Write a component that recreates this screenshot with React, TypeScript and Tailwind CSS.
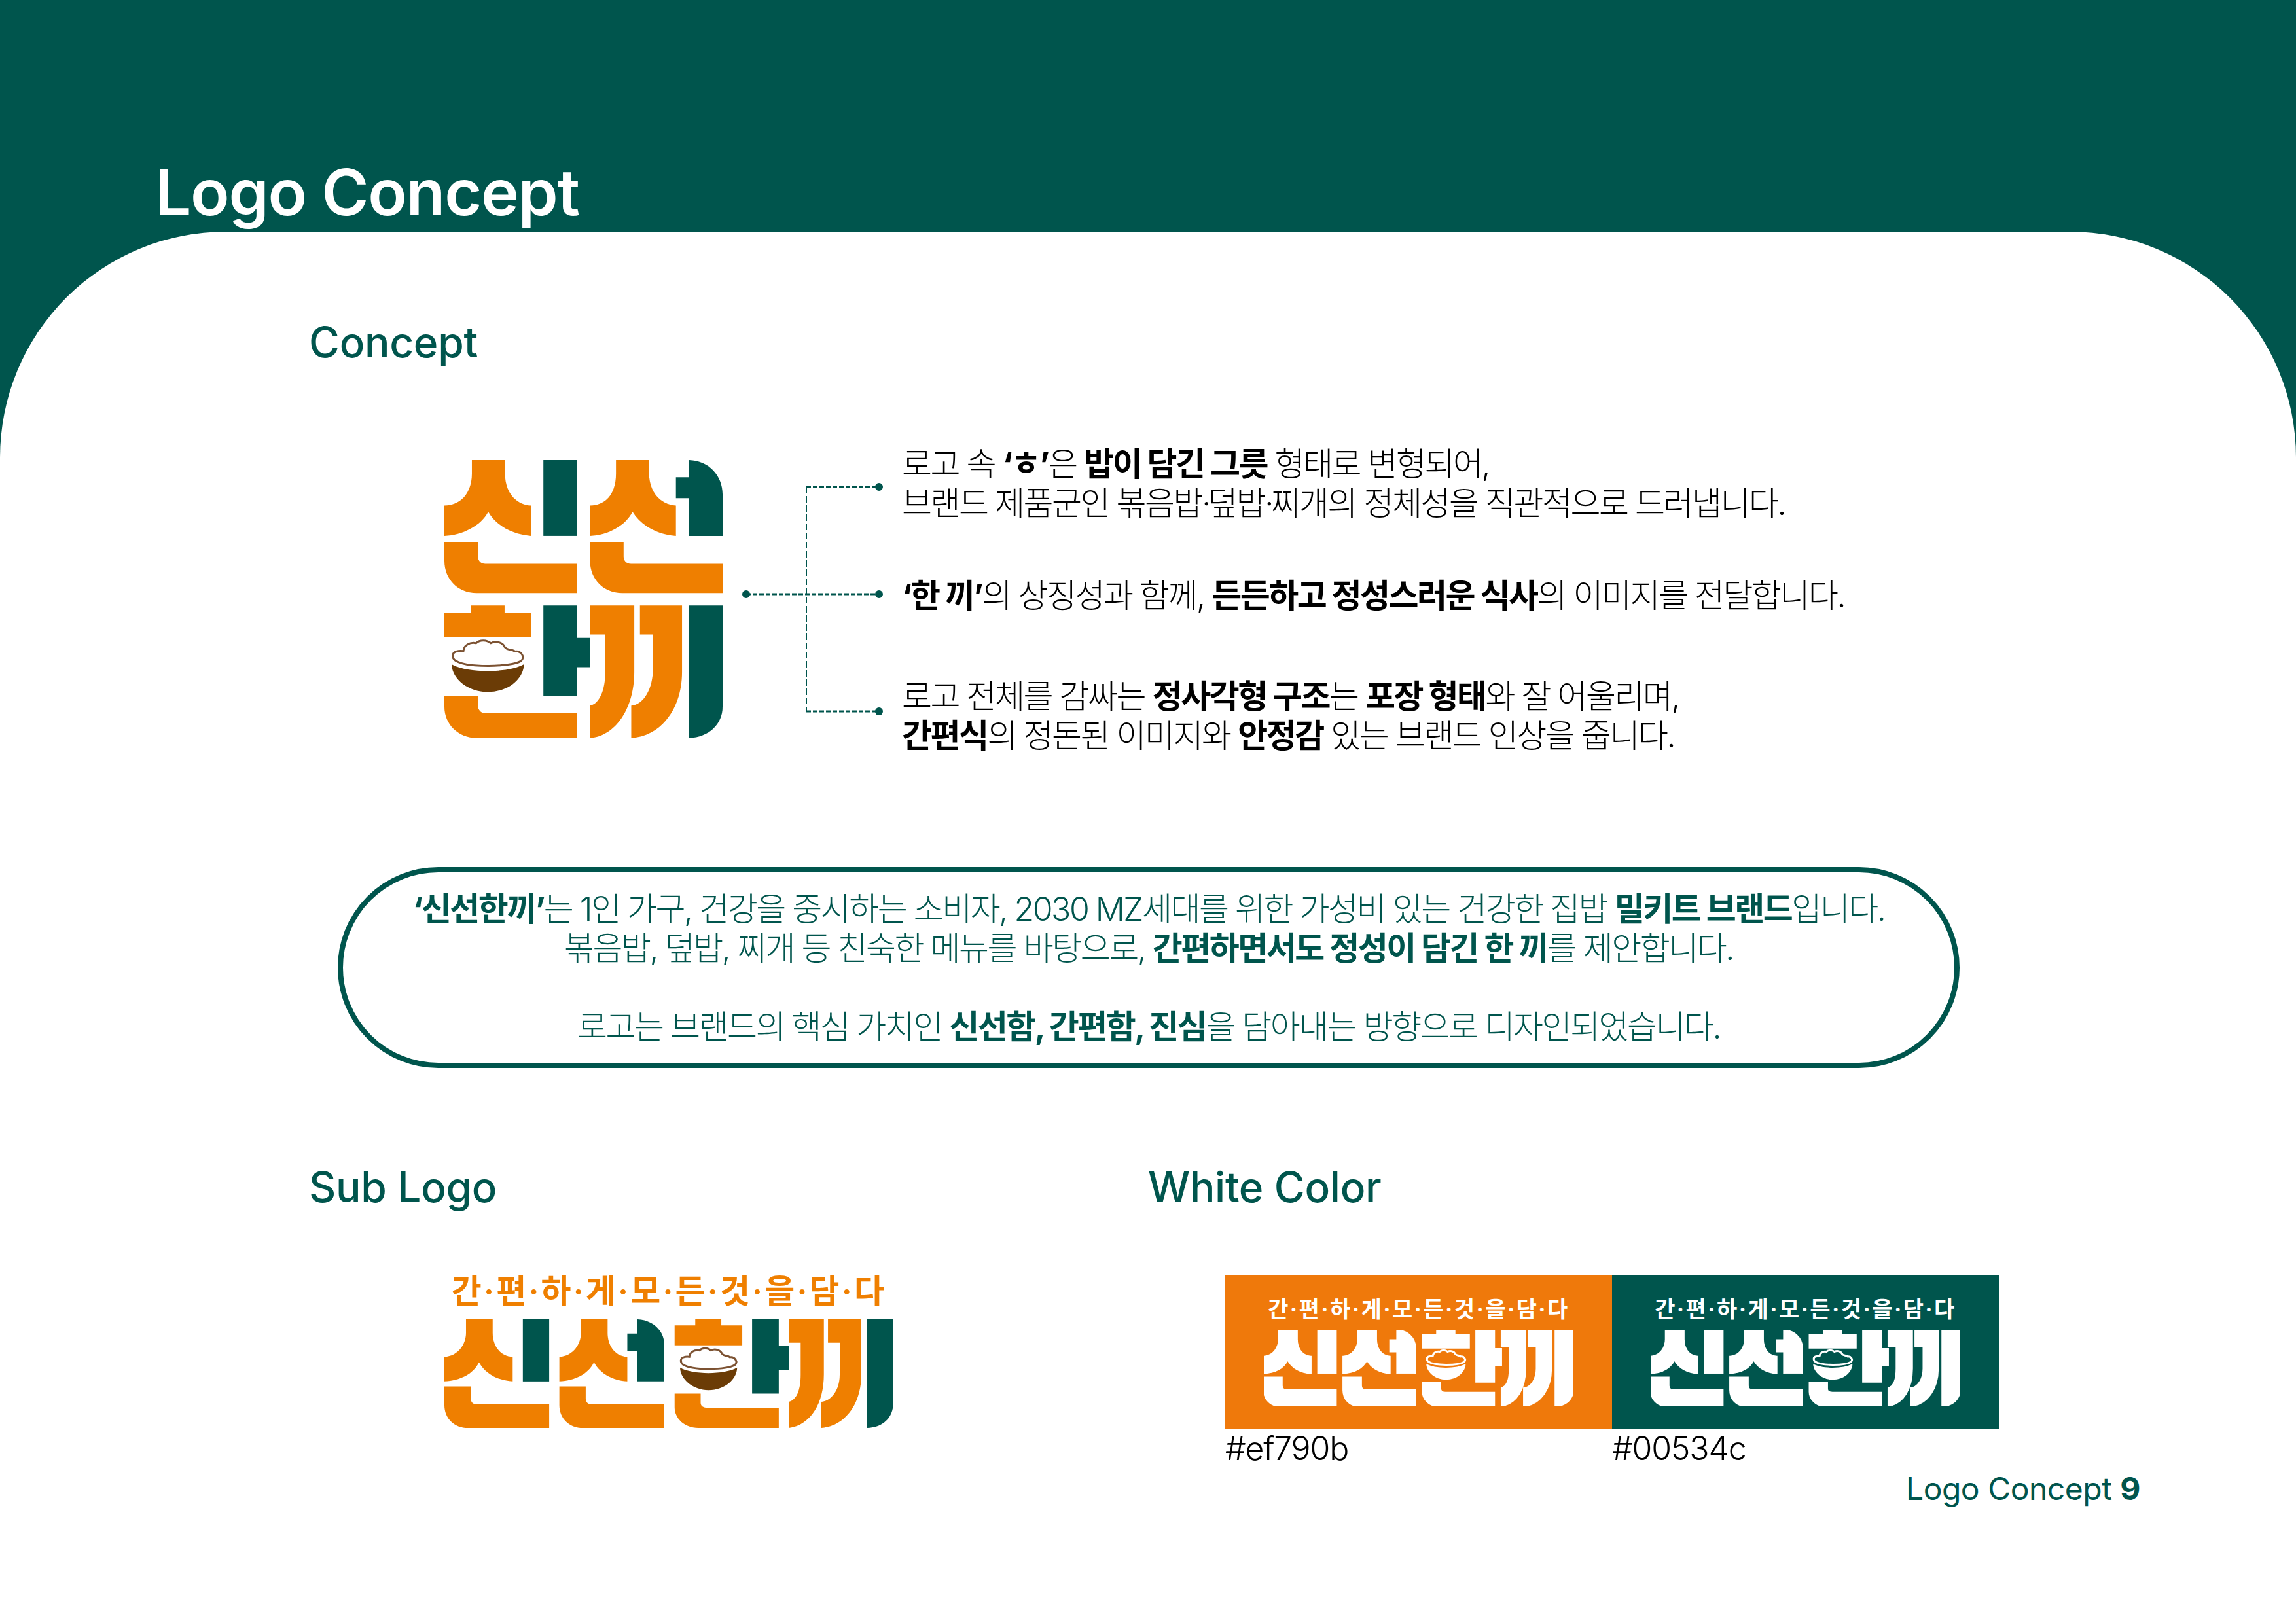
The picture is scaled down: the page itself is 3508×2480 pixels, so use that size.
const GREEN = "#00554d";
const ORANGE = "#ef7f00";
const BROWN = "#6b3c06";
const RICE_LINE = "#7c5232";

type BowlProps = {
  rice: string;
  line: string;
  bowl: string;
  lineWidth: number;
};

// drawn in the coordinates of the square logo, the wide logo squeezes it with a transform
const Bowl = ({ rice, line, bowl, lineWidth }: BowlProps) => (
  <>
    <path
      d="M168 1048C150 1036 150 1012 172 1006C184 1002 196 1003 204 1004C206 978 234 962 262 968C282 950 312 954 330 968C352 956 384 964 394 986C404 1002 428 994 440 1006C468 1002 490 1032 468 1050C420 1078 222 1082 168 1048Z"
      fill={rice}
      stroke={line}
      strokeWidth={lineWidth}
      vectorEffect="non-scaling-stroke"
    />
    <path
      d="M150 1065C220 1106 410 1106 482 1065C480 1132 410 1192 316 1192C226 1192 152 1132 150 1065Z"
      fill={bowl}
    />
  </>
);

const SquareLogo = () => (
  <svg viewBox="117 128 1276 1276" className="h-[425px] w-[425px] shrink-0">
    <g fill={ORANGE}>
      <path d="M243 128H395V190C395 260 430 330 514 337V476C430 470 355 430 318 365C285 430 200 472 117 476V337C200 335 243 270 243 190Z" />
      <path d="M904 128H1056V190C1056 260 1095 330 1179 337V476C1095 470 1020 430 980 365C947 430 868 472 785 476V337C868 335 904 270 904 190Z" />
      <path d="M117 503H271V570C271 590 285 604 305 604H725V738H265C180 738 117 675 117 590Z" />
      <path d="M785 503H939V570C939 590 953 604 973 604H1393V738H933C848 738 785 675 785 590Z" />
      <path d="M239 795H393V828H514V941H117V828H239Z" />
      <path d="M117 1210H271V1255C271 1275 285 1290 305 1290H725V1403H265C180 1403 117 1340 117 1260Z" />
      <path d="M785 795H988V1100C988 1270 900 1395 785 1403V1255C830 1245 855 1180 855 1100V928H785Z" />
      <path d="M1014 795H1207V1100C1207 1270 1110 1395 974 1403V1255C1030 1250 1074 1180 1074 1080V928H1014Z" />
    </g>
    <g fill={GREEN}>
      <rect x="571" y="128" width="154" height="348" />
      <path d="M1239 128C1330 130 1393 200 1393 285V476H1239V303H1179V207H1239Z" />
      <path d="M571 795H725V944H785V1078H725V1210H571Z" />
      <path d="M1239 795H1393V1260C1393 1340 1330 1400 1239 1403Z" />
    </g>
    <Bowl rice="#ffffff" line={RICE_LINE} bowl={BROWN} lineWidth={3} />
  </svg>
);

type WideLogoProps = {
  main: string;
  accent: string;
  rice: string;
  line: string;
  bowl: string;
  lineWidth: number;
  grow?: number;
  className: string;
};

const WideLogo = ({ main, accent, rice, line, bowl, lineWidth, grow = 0, className }: WideLogoProps) => (
  <svg viewBox="80 318 1414 497" preserveAspectRatio="none" className={className}>
    <g fill={main} stroke={main} strokeWidth={grow}>
      <path d="M148 318H232V380C232 430 250 485 295 490V602C250 598 210 570 189 515C170 570 130 598 80 602V490C125 485 148 430 148 380Z" />
      <path d="M510 318H594V380C594 430 612 485 656 490V602C612 598 572 570 551 515C532 570 492 598 442 602V490C487 485 510 430 510 380Z" />
      <path d="M80 625H163V680C163 697 170 707 185 707H410V815H155C110 815 80 770 80 710Z" />
      <path d="M442 625H525V680C525 697 532 707 547 707H772V815H517C472 815 442 770 442 710Z" />
      <path d="M870 318H952V346H1018V437H805V346H870Z" />
      <path d="M805 658H887V700C887 715 895 723 910 723H1133V815H880C835 815 805 770 805 720Z" />
      <path d="M1165 318H1275V570C1275 700 1235 800 1165 815V695C1190 685 1202 640 1202 570V425H1165Z" />
      <path d="M1288 318H1393V570C1393 700 1345 805 1267 815V695C1300 690 1325 640 1325 570V425H1288Z" />
    </g>
    <g fill={accent} stroke={accent} strokeWidth={grow}>
      <rect x="327" y="318" width="83" height="284" />
      <path d="M688 318C735 320 772 370 772 430V602H688V462H656V383H688Z" />
      <path d="M1049 318H1133V440H1165V550H1133V658H1049Z" />
      <path d="M1411 318H1494V695C1494 770 1460 812 1411 815Z" />
    </g>
    <g transform="translate(822 450) scale(0.542 0.81) translate(-150 -955)">
      <Bowl rice={rice} line={line} bowl={bowl} lineWidth={lineWidth} />
    </g>
  </svg>
);

const Connector = () => (
  <svg viewBox="0 0 216 425" className="h-[425px] w-[216px] shrink-0 overflow-visible" fill="none" stroke={GREEN} strokeWidth="2">
    <path d="M102 41V384" strokeDasharray="10 4" />
    <path d="M102 41H213M10 205H213M102 384H213" strokeWidth="3" strokeDasharray="7 3" />
    <g fill={GREEN} stroke="none">
      <circle cx="213" cy="41" r="6" />
      <circle cx="10" cy="205" r="6" />
      <circle cx="213" cy="205" r="6" />
      <circle cx="213" cy="384" r="6" />
    </g>
  </svg>
);

const Swatch = ({ bg, label }: { bg: string; label: string }) => (
  <div className="w-[591px]">
    <div className={`flex h-[236px] flex-col items-center ${bg === GREEN ? "bg-[#00554d]" : "bg-[#ef790b]"}`}>
      <p className="mt-[33px] text-[34px] leading-[40px] font-bold tracking-[2.4px] whitespace-nowrap text-white">간·편·하·게·모·든·것·을·담·다</p>
      <WideLogo
        main="#ffffff"
        accent="#ffffff"
        rice={bg}
        line="#ffffff"
        bowl="#ffffff"
        lineWidth={3}
        grow={6}
        className="mt-[11px] h-[117px] w-[473px]"
      />
    </div>
    <p className="-mt-[1px] text-[50px] leading-[60px] font-light tracking-[-1.2px] text-black">{label}</p>
  </div>
);

export default function App() {
  return (
    <div className="flex h-[2480px] w-[3508px] flex-col bg-[#00554d] font-[Inter,'Noto_Sans_CJK_KR',sans-serif]">
      <header className="h-[354px] shrink-0 pt-[234px] pl-[237px]">
        <h1 className="text-[98px] leading-[120px] font-semibold tracking-[-1.3px] text-white">Logo Concept</h1>
      </header>

      <main className="flex-1 rounded-t-[345px] bg-white pt-[129px] pl-[472px]">
        <h2 className="text-[64px] leading-[80px] font-medium tracking-[-0.3px] text-[#00554d]">Concept</h2>

        <section className="mt-[140px] ml-[207px] flex h-[425px] items-start">
          <SquareLogo />
          <div className="ml-[26px]">
            <Connector />
          </div>
          <div className="-mt-[24px] ml-[32px] flex flex-col text-[50px] leading-[60px] font-light tracking-[-2.5px] whitespace-nowrap text-black">
            <p>
              로고 속 <b className="font-bold">‘ㅎ’</b>은 <b className="font-bold">밥이 담긴 그릇</b> 형태로 변형되어,
              <br />
              브랜드 제품군인 볶음밥<span className="tracking-[-5px]">·</span>덮밥<span className="tracking-[-5px]">·</span>찌개의 정체성을 직관적으로 드러냅니다.
            </p>
            <p className="mt-[81px]">
              <b className="font-bold">‘한 끼’</b>의 상징성과 함께, <b className="font-bold">든든하고 정성스러운 식사</b>의 이미지를 전달합니다.
            </p>
            <p className="mt-[94px]">
              로고 전체를 감싸는 <b className="font-bold">정사각형 구조</b>는 <b className="font-bold">포장 형태</b>와 잘 어울리며,
              <br />
              <b className="font-bold">간편식</b>의 정돈된 이미지와 <b className="font-bold">안정감</b> 있는 브랜드 인상을 줍니다.
            </p>
          </div>
        </section>

        <section className="mt-[197px] ml-[44px] flex h-[307px] w-[2478px] flex-col justify-center rounded-full border-[8px] border-[#00554d] text-center text-[50px] leading-[60px] font-light tracking-[-2.5px] text-[#00554d]">
          <p>
            <b className="font-bold">‘신선한끼’</b>는 1인 가구, 건강을 중시하는 소비자, 2030 MZ세대를 위한 가성비 있는 건강한 집밥 <b className="font-bold">밀키트 브랜드</b>입니다.
          </p>
          <p>
            볶음밥, 덮밥, 찌개 등 친숙한 메뉴를 바탕으로, <b className="font-bold">간편하면서도 정성이 담긴 한 끼</b>를 제안합니다.
          </p>
          <p className="mt-[60px]">
            로고는 브랜드의 핵심 가치인 <b className="font-bold">신선함, 간편함, 진심</b>을 담아내는 방향으로 디자인되었습니다.
          </p>
        </section>

        <section className="mt-[142px] flex">
          <div className="w-[1282px] shrink-0">
            <h2 className="text-[64px] leading-[80px] font-medium tracking-[-0.3px] text-[#00554d]">Sub Logo</h2>
            <div className="mt-[89px] ml-[207px] w-[686px]">
              <p className="text-center text-[50px] leading-[60px] font-semibold tracking-[3.2px] whitespace-nowrap text-[#ef7f00]">간·편·하·게·모·든·것·을·담·다</p>
              <WideLogo
                main={ORANGE}
                accent={GREEN}
                rice="#ffffff"
                line={RICE_LINE}
                bowl={BROWN}
                lineWidth={3}
                className="mt-[13px] h-[166px] w-[686px]"
              />
            </div>
          </div>
          <div>
            <h2 className="text-[64px] leading-[80px] font-medium tracking-[-0.3px] text-[#00554d]">White Color</h2>
            <div className="mt-[94px] ml-[118px] flex">
              <Swatch bg="#ef790b" label="#ef790b" />
              <Swatch bg={GREEN} label="#00534c" />
            </div>
          </div>
        </section>

        <footer className="mt-[2px] pr-[238px] text-right text-[48px] leading-[60px] tracking-[-0.5px] text-[#00554d]">
          Logo Concept <b className="font-bold">9</b>
        </footer>
      </main>
    </div>
  );
}
